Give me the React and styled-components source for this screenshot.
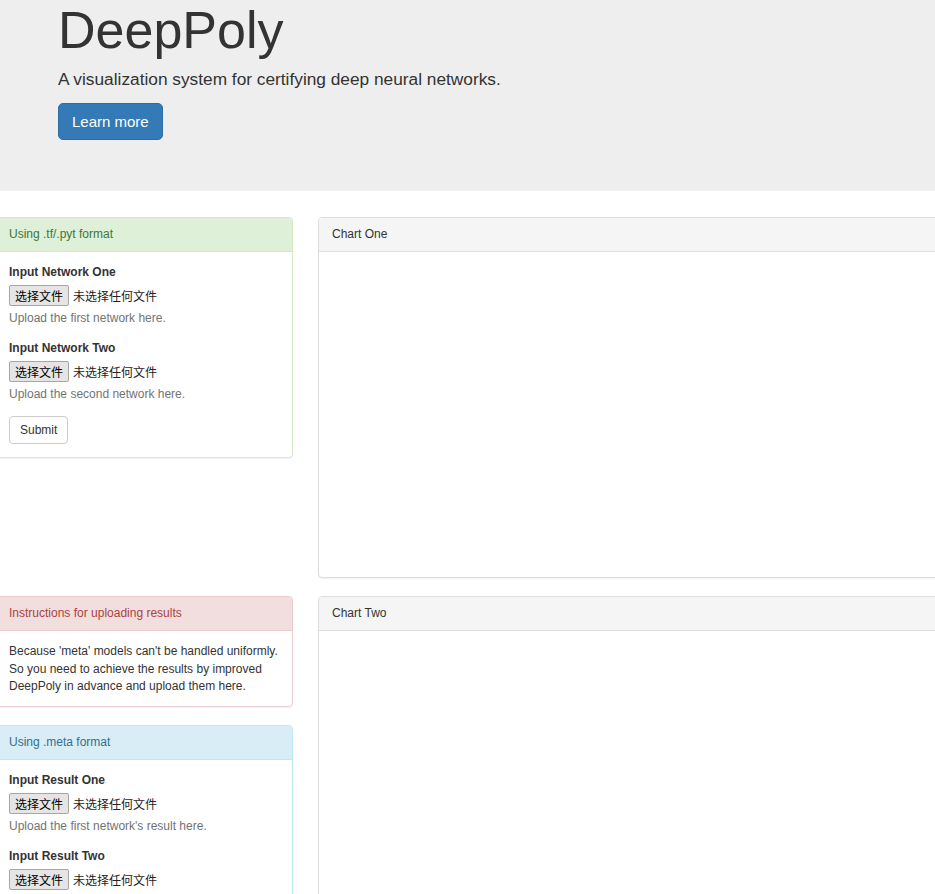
import React from 'react'
import styled, { createGlobalStyle } from 'styled-components'

const GlobalStyle = createGlobalStyle`
  html, body {
    margin: 0;
    padding: 0;
    overflow: hidden;
    background: #fff;
  }
  body {
    font-family: "Liberation Sans", Arial, sans-serif;
    font-size: 12px;
    line-height: 17px;
    color: #333;
  }
  * {
    box-sizing: border-box;
  }
`

const colors = {
  default: { bg: '#f5f5f5', text: '#333', border: '#ddd' },
  success: { bg: '#dff0d8', text: '#3c763d', border: '#d6e9c6' },
  danger: { bg: '#f2dede', text: '#a94442', border: '#ebccd1' },
  info: { bg: '#d9edf7', text: '#31708f', border: '#bce8f1' },
}

function App() {
  return (
    <>
      <GlobalStyle />
      <Jumbotron>
        <Title>DeepPoly</Title>
        <Lead>A visualization system for certifying deep neural networks.</Lead>
        <PrimaryButton>Learn more</PrimaryButton>
      </Jumbotron>

      <Row>
        <Column>
          <Panel $variant="success">
            <PanelHeading $variant="success">Using .tf/.pyt format</PanelHeading>
            <PanelBody>
              <FormGroup>
                <Label>Input Network One</Label>
                <FileInput />
                <Help>Upload the first network here.</Help>
              </FormGroup>
              <FormGroup>
                <Label>Input Network Two</Label>
                <FileInput />
                <Help>Upload the second network here.</Help>
              </FormGroup>
              <SubmitButton>Submit</SubmitButton>
            </PanelBody>
          </Panel>
        </Column>
        <Column>
          <Panel $variant="default">
            <PanelHeading $variant="default">Chart One</PanelHeading>
            <ChartBody />
          </Panel>
        </Column>
      </Row>

      <Row>
        <Column>
          <Panel $variant="danger">
            <PanelHeading $variant="danger">Instructions for uploading results</PanelHeading>
            <NoteBody>
              Because 'meta' models can't be handled uniformly. So you need to achieve the results by
              improved DeepPoly in advance and upload them here.
            </NoteBody>
          </Panel>
          <Panel $variant="info">
            <PanelHeading $variant="info">Using .meta format</PanelHeading>
            <PanelBody>
              <FormGroup>
                <Label>Input Result One</Label>
                <FileInput />
                <Help>Upload the first network's result here.</Help>
              </FormGroup>
              <FormGroup>
                <Label>Input Result Two</Label>
                <FileInput />
                <Help>Upload the second network's result here.</Help>
              </FormGroup>
              <SubmitButton>Submit</SubmitButton>
            </PanelBody>
          </Panel>
        </Column>
        <Column>
          <Panel $variant="default">
            <PanelHeading $variant="default">Chart Two</PanelHeading>
            <ChartBody />
          </Panel>
        </Column>
      </Row>
    </>
  )
}

function FileInput() {
  return (
    <FileRow>
      <FileButton type="button">选择文件</FileButton>
      <FileName>未选择任何文件</FileName>
    </FileRow>
  )
}

export default App


const Jumbotron = styled.header`
  background: #eee;
  padding: 2px 58px 51px;
`

const Title = styled.h1`
  margin: 0;
  font-size: 52px;
  line-height: 57px;
  font-weight: normal;
  color: #333;
`

const Lead = styled.p`
  margin: 8px 0 12px;
  font-size: 17.3px;
  line-height: 24px;
  color: #333;
`

const PrimaryButton = styled.button`
  display: inline-block;
  height: 37px;
  padding: 0 13px;
  font-family: "Liberation Sans", Arial, sans-serif;
  font-size: 15px;
  color: #fff;
  background: #337ab7;
  border: 1px solid #2e6da4;
  border-radius: 5px;
`

const Row = styled.section`
  display: grid;
  grid-template-columns: 298px 1fr;
  column-gap: 25px;
  align-items: start;
  margin-left: -5px;
  width: calc(100% + 120px);

  &:first-of-type {
    margin-top: 26px;
  }
`

const Column = styled.div`
  min-width: 0;
`

const Panel = styled.div`
  margin-bottom: 18px;
  background: #fff;
  border: 1px solid ${p => colors[p.$variant].border};
  border-radius: 4px;
  box-shadow: 0 1px 1px rgba(0, 0, 0, 0.05);
`

const PanelHeading = styled.div`
  padding: 8px 13px;
  line-height: 17px;
  font-size: 12px;
  color: ${p => colors[p.$variant].text};
  background: ${p => colors[p.$variant].bg};
  border-bottom: 1px solid ${p => colors[p.$variant].border};
  border-radius: 3px 3px 0 0;
`

const PanelBody = styled.div`
  padding: 12px 13px 13px;
`

const NoteBody = styled.div`
  padding: 12px 13px 10px;
  line-height: 17.5px;
  color: #333;
`

const ChartBody = styled.div`
  height: 325px;
`

const FormGroup = styled.div`
  margin-bottom: 13px;
`

const Label = styled.label`
  display: block;
  margin-bottom: 4px;
  font-weight: bold;
`

const FileRow = styled.div`
  display: flex;
  align-items: center;
  height: 21px;
`

const FileButton = styled.button`
  height: 21px;
  padding: 0 5px;
  font-family: "Noto Sans CJK SC", sans-serif;
  font-size: 12px;
  line-height: 19px;
  color: #000;
  background: #e5e5e5;
  border: 1px solid #a6a6a6;
  border-radius: 2px;
`

const FileName = styled.span`
  margin-left: 4px;
  font-family: "Noto Sans CJK SC", sans-serif;
  font-size: 12px;
  color: #222;
`

const Help = styled.p`
  margin: 4px 0 0;
  color: #737373;
`

const SubmitButton = styled.button`
  height: 28px;
  padding: 0 10px;
  font-family: "Liberation Sans", Arial, sans-serif;
  font-size: 12px;
  color: #333;
  background: #fff;
  border: 1px solid #ccc;
  border-radius: 4px;
`
